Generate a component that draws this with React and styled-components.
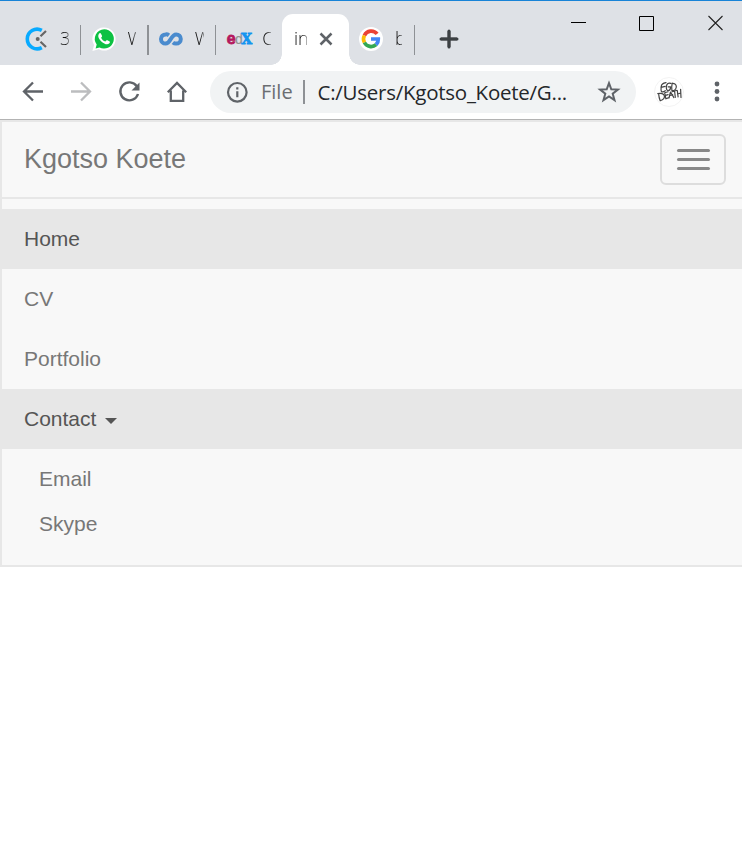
import React from "react";
import styled, { createGlobalStyle } from "styled-components";

const GlobalStyle = createGlobalStyle`
  * { box-sizing: border-box; }
  body { margin: 0; background: #fff; overflow: hidden; }
  svg { display: block; flex: none; overflow: visible; }
`;

const Window = styled.div`
  width: 742px;
  height: 858px;
  background: #fff;
  font-family: "Open Sans", "Noto Sans", sans-serif;
  overflow: hidden;
`;

const TabStrip = styled.header`
  display: flex;
  height: 65px;
  padding-left: 14px;
  border-top: 1px solid #1883d7;
  background: #dee1e6;
`;

const Tab = styled.div`
  display: flex;
  align-items: center;
  width: ${(p) => p.$width || 67.4}px;
  height: 51px;
  margin-top: 13px;
  padding-left: ${(p) => (p.$active ? 12 : 10.5)}px;
  flex: none;
  background: ${(p) => (p.$active ? "#fff" : "transparent")};
  border-radius: ${(p) => (p.$active ? "11px 11px 0 0" : "0")};
  position: relative;
`;

const TabFoot = styled.span`
  position: absolute;
  bottom: 0;
  ${(p) => p.$side}: -11px;
  width: 11px;
  height: 11px;
  background: radial-gradient(circle at ${(p) => (p.$side === "left" ? "0 0" : "100% 0")}, transparent 10.5px, #fff 11px);
`;

const TabIcon = styled.span`
  display: grid;
  place-items: center;
  width: 24px;
  height: 24px;
  margin-bottom: 1px;
  flex: none;
`;

const TabTitle = styled.span`
  width: ${(p) => p.$width || 9}px;
  margin-left: ${(p) => p.$gap ?? 11.5}px;
  margin-bottom: 3px;
  overflow: hidden;
  white-space: nowrap;
  font-size: 18px;
  font-weight: 300;
  line-height: 26px;
  color: #111;
  mask-image: linear-gradient(90deg, #000 65%, rgba(0, 0, 0, 0.4));
`;

const Divider = styled.span`
  width: 1.5px;
  height: ${(p) => p.$height}px;
  background: #8e9195;
  flex: none;
  margin-left: ${(p) => p.$left || "0"};
`;

const CloseTab = styled.span`
  margin: 0 0 2px 12px;
`;

const NewTab = styled.div`
  padding: 28px 0 0 23.5px;
`;

const WindowControls = styled.div`
  display: flex;
  gap: 53px;
  margin: 14px 19px 0 auto;
`;

const ControlIcon = styled.span`
  margin-right: ${(p) => p.$nudge || 0}px;
`;

const Toolbar = styled.div`
  display: flex;
  align-items: center;
  height: 55px;
  padding-left: 21px;
  border-bottom: 1px solid #b3b3b3;
`;

const NavButtons = styled.div`
  display: flex;
  gap: 24px;
`;

const AddressBar = styled.div`
  display: flex;
  align-items: center;
  width: 426px;
  height: 42px;
  margin-left: 21px;
  padding: 0 15px;
  border-radius: 21px;
  background: #f1f3f4;
`;

const Scheme = styled.span`
  width: 32px;
  margin-left: 12px;
  font-size: 20px;
  line-height: 30px;
  color: #6b6e72;
  white-space: nowrap;
`;

const Url = styled.span`
  margin-left: 13px;
  font-size: 20.5px;
  line-height: 30px;
  letter-spacing: -0.25px;
  color: #24272a;
  white-space: nowrap;
`;

const Star = styled.span`
  margin-left: auto;
`;

const Profile = styled.div`
  display: flex;
  align-items: center;
  gap: 29px;
  margin-left: 18px;
`;

const Navbar = styled.nav`
  height: 447px;
  border: 2px solid #e7e7e7;
  border-right: 0;
  background: #f8f8f8;
  font-family: "Liberation Sans", Arial, sans-serif;
  color: #777;
`;

const NavHeader = styled.div`
  display: flex;
  align-items: flex-start;
  justify-content: space-between;
  height: 77px;
  padding: 12px 16px 0 22px;
  border-bottom: 2px solid #e7e7e7;
`;

const Brand = styled.a`
  margin-top: 10px;
  font-size: 27px;
  line-height: 30px;
`;

const Toggle = styled.button`
  display: flex;
  flex-direction: column;
  align-items: center;
  justify-content: center;
  gap: 6px;
  width: 66px;
  height: 51px;
  padding: 0;
  border: 2px solid #ddd;
  border-radius: 6px;
  background: transparent;
`;

const ToggleBar = styled.span`
  width: 33px;
  height: 3px;
  border-radius: 1.5px;
  background: #888;
`;

const Menu = styled.div`
  padding-top: 10px;
`;

const MenuItem = styled.a`
  display: flex;
  align-items: center;
  height: 60px;
  padding-left: 22px;
  font-size: 21px;
  line-height: 30px;
  color: ${(p) => (p.$active ? "#555" : "#777")};
  background: ${(p) => (p.$active ? "#e7e7e7" : "transparent")};
`;

const Caret = styled.span`
  margin: 3px 0 0 9px;
  border: 6px solid transparent;
  border-top-color: #555;
  border-bottom: 0;
`;

const Submenu = styled.div`
  padding-top: 7.5px;
`;

const SubItem = styled.a`
  display: flex;
  align-items: center;
  height: 45px;
  padding-left: 37px;
  font-size: 21px;
  line-height: 30px;
`;

const ClockIcon = () => (
  <svg width="24" height="24" viewBox="0 0 24 24" fill="none">
    <path d="M16.8 3.4A9.8 9.8 0 1 0 16.8 20.6" stroke="#08aaff" strokeWidth="3.6" />
    <circle cx="12.7" cy="12" r="2" fill="#666" />
    <path d="m15.5 9.2 5.5-5.2M15.5 14.8l5.5 5.2" stroke="#666" strokeWidth="2.2" />
  </svg>
);

const ChatIcon = () => (
  <svg width="24" height="24" viewBox="0 0 24 24">
    <path d="M12 .4A11.5 11.5 0 0 1 12 23.6c-2 0-3.7-.5-5.3-1.3L.4 24l1.7-6.1A11.5 11.5 0 0 1 12 .4Z" fill="#fff" />
    <path d="M12.3 2.2a9.7 9.7 0 1 1-4.8 18.2l-3.9 1 1.1-3.8A9.7 9.7 0 0 1 12.3 2.2Z" fill="#0dc143" />
    <path d="M8.5 6.2c-.5-.3-1.1-.1-1.5.5-1.8 2.4 0 5.6 2.6 8 2.5 2.2 5.5 3.5 7.5 1.9.8-.6 1-1.5.6-2l-2.3-1.3c-.5-.2-.8-.1-1.1.3l-.9 1c-2-.7-3.4-2-4.3-3.9l.8-1c.2-.3.2-.6.1-.9L9 6.8c-.1-.3-.2-.5-.5-.6Z" fill="#fff" />
  </svg>
);

const InfinityIcon = () => (
  <svg width="24" height="24" viewBox="0 0 24 24" fill="none">
    <path d="M9.9 8.3A4.5 4.5 0 0 0 6.6 7.4a4.6 4.6 0 0 0 0 9.2c5.4 0 5-9.2 10.6-9.2a4.6 4.6 0 0 1 0 9.2 4.7 4.7 0 0 1-3.3-1.1" stroke="#4a8bce" strokeWidth="4" />
  </svg>
);

const EdxText = styled.span`
  display: flex;
  align-items: baseline;
  font-family: "Liberation Sans", Arial, sans-serif;
  font-weight: 700;
  line-height: 24px;
`;

const EdxLetter = styled.span`
  color: ${(p) => p.$color};
  font-family: ${(p) => (p.$serif ? '"DejaVu Serif", serif' : "inherit")};
  font-weight: ${(p) => (p.$light ? 400 : 700)};
  font-size: ${(p) => p.$size}px;
  letter-spacing: ${(p) => p.$tight || 0}px;
  -webkit-text-stroke: ${(p) => (p.$light ? 0.2 : 0.8)}px currentColor;
`;

const GoogleIcon = () => (
  <svg width="24" height="24" viewBox="0 0 24 24" fill="none">
    <circle cx="12" cy="12" r="12" fill="#fff" />
    <g strokeWidth="3.7">
      <path d="M18.1 6.9A7.5 7.5 0 0 0 5.4 8.5" stroke="#ea4335" />
      <path d="M5.4 8.5a7.5 7.5 0 0 0 0 7" stroke="#fbbc05" />
      <path d="M5.4 15.5a7.5 7.5 0 0 0 11.7 2.1" stroke="#34a853" />
      <path d="M17.1 17.6A7.5 7.5 0 0 0 19.3 12H12" stroke="#4285f4" />
    </g>
  </svg>
);

const LineIcon = ({ w = 24, h = w, d, color = "#5f6368", stroke = 2.2, children, join = "miter" }) => (
  <svg width={w} height={h} viewBox={`0 0 ${w} ${h}`} fill="none" stroke={color} strokeWidth={stroke} strokeLinejoin={join}>
    {d && <path d={d} />}
    {children}
  </svg>
);

const ProfileIcon = () => (
  <svg width="30" height="30" viewBox="0 0 30 30" fill="none" stroke="#444" strokeLinecap="round" strokeLinejoin="round">
    <circle cx="15" cy="15" r="14.5" stroke="#f0f0f0" strokeWidth=".8" />
    <g strokeWidth="1.2">
      <path d="M12 5.6C9.2 6 7.4 7.4 7.2 9.5c-.2 1.8-.5 3.9.3 5.2 1.2.5 2.8-.2 3.8-1M7 10.3l4.2-1" />
      <path d="M16.6 6.4c-2-1-3.8.4-4.2 2.8-.4 2.8.5 4.8 2 4.5 1.6-.3 2.2-2.2 2.1-3.9h-2.4" />
      <path d="M18.2 6.2c-.5 2.4-.8 5-.3 7.4 2.6.2 4.6-1.5 4.4-4.2-.2-2.2-1.9-3.4-4.5-3" />
      <path d="M4.6 16.6c.2 2.4.7 4.8 1.6 7.2 2.7-1 4.6-2.8 4.2-5-.5-2-3.4-3-6.6-2.1" />
      <path d="M14 14.8l-3.3 1 1.2 6 3-1.2M11.4 18.4l2.7-.7M15 21l1.5-6 3.4 5.6M15.8 18.5l3-.6" />
      <path d="M18 14.8l5-1.5M20.6 14.3l.7 6M23.3 13.6l.8 6.2M26.6 12.3l.4 8.2M23.6 17l3.2-1" />
    </g>
  </svg>
);

export default function App() {
  return (
    <Window>
      <GlobalStyle />
      <TabStrip>
        <Tab>
          <TabIcon><ClockIcon /></TabIcon>
          <TabTitle>3</TabTitle>
          <Divider $height={30} $left="auto" />
        </Tab>
        <Tab>
          <TabIcon><ChatIcon /></TabIcon>
          <TabTitle>W</TabTitle>
          <Divider $height={30} $left="auto" />
        </Tab>
        <Tab>
          <TabIcon><InfinityIcon /></TabIcon>
          <TabTitle>W</TabTitle>
          <Divider $height={30} $left="auto" />
        </Tab>
        <Tab $width={65.8}>
          <TabIcon>
            <EdxText>
              <EdxLetter $color="#b5175e" $size={16} $tight={-0.6}>e</EdxLetter>
              <EdxLetter $color="#929292" $size={14} $light $tight={-1.6}>d</EdxLetter>
              <EdxLetter $color="#1595f0" $size={14} $serif>X</EdxLetter>
            </EdxText>
          </TabIcon>
          <TabTitle>C</TabTitle>
        </Tab>
        <Tab $active $width={67}>
          <TabFoot $side="left" />
          <TabTitle $gap={0} $width={13}>in</TabTitle>
          <CloseTab>
            <LineIcon w={14} d="m1.5 1.5 11 11M12.5 1.5l-11 11" stroke={2.5} />
          </CloseTab>
          <TabFoot $side="right" />
        </Tab>
        <Tab $width={66.5}>
          <TabIcon><GoogleIcon /></TabIcon>
          <TabTitle $width={7}>b</TabTitle>
          <Divider $height={30} $left="auto" />
        </Tab>
        <NewTab>
          <LineIcon w={20} d="M10 2v16M2 10h16" stroke={3}>
            <path d="M10 2v16M2 10h16" stroke="#3c4043" strokeLinecap="round" />
          </LineIcon>
        </NewTab>
        <WindowControls>
          <LineIcon w={15} h={17} d="M0 7.5h15" color="#000" stroke={1} />
          <ControlIcon $nudge={1}>
            <LineIcon w={15} h={17} d="M.5 1.5h14v14H.5z" color="#000" stroke={1} />
          </ControlIcon>
          <LineIcon w={15} h={17} d="m.5 1 14 14M14.5 1l-14 14" color="#222" stroke={1.1} />
        </WindowControls>
      </TabStrip>
      <Toolbar>
        <NavButtons>
          <LineIcon d="M22 11.5H3M12 2.5l-9 9 9 9" stroke={2.3} />
          <LineIcon d="M2 11.5h19M12 2.5l9 9-9 9" stroke={2.3} color="#bcbdbf" />
          <LineIcon d="M19.8 6.2A9 9 0 1 0 21 14" stroke={2.4}>
            <path d="M22.5 2.5v8h-8Z" fill="#5f6368" stroke="none" />
          </LineIcon>
          <LineIcon d="M2.8 12.2 12 3l9.2 9.2M5.8 10.6v10.3h12.4V10.6" stroke={2.3} />
        </NavButtons>
        <AddressBar>
          <LineIcon>
            <circle cx="12.3" cy="12.3" r="9.3" />
            <path d="M12.3 11.3v6M12.3 7.3v2.2" />
          </LineIcon>
          <Scheme>File</Scheme>
          <Divider $height={24} $left="10px" />
          <Url>C:/Users/Kgotso_Koete/G...</Url>
          <Star>
            <LineIcon d="m12 3.2 2.3 6.1 6.6.3-5.2 4.1 1.8 6.4-5.5-3.7-5.5 3.7 1.8-6.4-5.2-4.1 6.6-.3Z" stroke={2} />
          </Star>
        </AddressBar>
        <Profile>
          <ProfileIcon />
          <svg width="8" height="24" viewBox="0 0 8 24" fill="#5f6368">
            <circle cx="4" cy="4" r="2.4" />
            <circle cx="4" cy="11.5" r="2.4" />
            <circle cx="4" cy="19" r="2.4" />
          </svg>
        </Profile>
      </Toolbar>
      <Navbar>
        <NavHeader>
          <Brand>Kgotso Koete</Brand>
          <Toggle aria-label="Toggle navigation">
            <ToggleBar />
            <ToggleBar />
            <ToggleBar />
          </Toggle>
        </NavHeader>
        <Menu>
          <MenuItem $active>Home</MenuItem>
          <MenuItem>CV</MenuItem>
          <MenuItem>Portfolio</MenuItem>
          <MenuItem $active>
            Contact
            <Caret />
          </MenuItem>
          <Submenu>
            <SubItem>Email</SubItem>
            <SubItem>Skype</SubItem>
          </Submenu>
        </Menu>
      </Navbar>
    </Window>
  );
}
